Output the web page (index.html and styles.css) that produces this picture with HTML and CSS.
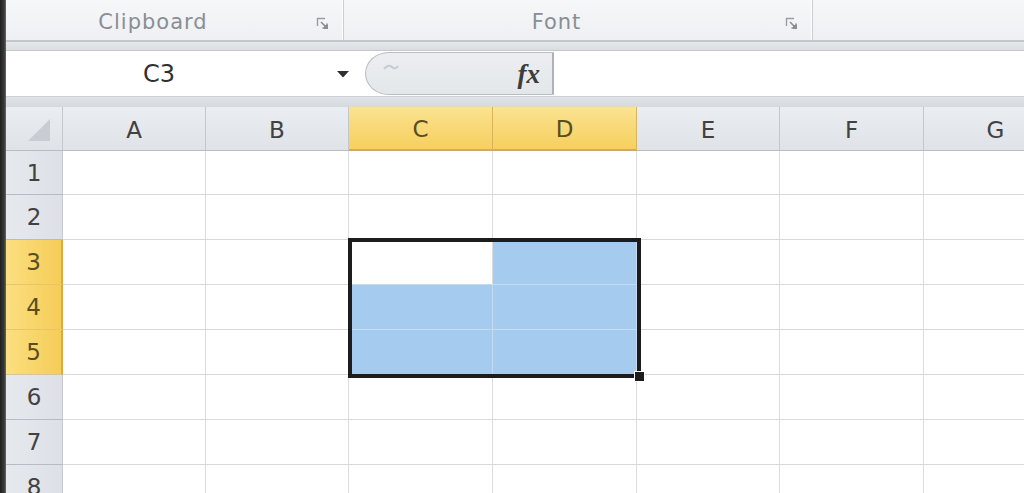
FILE: index.html
```html
<!DOCTYPE html>
<html lang="en">
<head>
<meta charset="utf-8">
<title>Spreadsheet</title>
<link rel="stylesheet" href="styles.css">
</head>
<body>
<div class="app">
  <div class="edge"></div>
  <div class="main">
    <div class="ribbon">
      <div class="group g1">
        <span class="glabel">Clipboard</span>
        <svg class="launcher" width="14" height="14" viewBox="0 0 14 14"><path d="M1.5 9V1.5H9" fill="none" stroke="#9a9ea4" stroke-width="1.4"/><path d="M5 5L11 11M11 6.5V11H6.5" fill="none" stroke="#8a8e94" stroke-width="1.6"/><rect x="8" y="8" width="4" height="4" fill="#8a8e94"/></svg>
      </div>
      <div class="group g2">
        <span class="glabel">Font</span>
        <svg class="launcher" width="14" height="14" viewBox="0 0 14 14"><path d="M1.5 9V1.5H9" fill="none" stroke="#9a9ea4" stroke-width="1.4"/><path d="M5 5L11 11M11 6.5V11H6.5" fill="none" stroke="#8a8e94" stroke-width="1.6"/><rect x="8" y="8" width="4" height="4" fill="#8a8e94"/></svg>
      </div>
      <div class="group g3"></div>
    </div>
    <div class="band"></div>
    <div class="fbar">
      <div class="namebox">
        <span class="ref">C3</span>
        <svg class="dd" width="14" height="8" viewBox="0 0 14 8"><path d="M1 1H13L7 7.5Z" fill="#2e2e2e"/></svg>
      </div>
      <div class="fxbox">
        <svg class="faint" width="18" height="10" viewBox="0 0 18 10"><path d="M2 6C5 2 8 2 10 4S14 6 16 3" fill="none" stroke="#c7cacf" stroke-width="2"/></svg>
        <span class="fx">fx</span>
      </div>
      <div class="finput"></div>
    </div>
    <div class="band2"></div>
    <div class="sheet">
      <div class="hd corner"><svg width="24" height="24" viewBox="0 0 24 24"><path d="M23 1V23H1Z" fill="#c9cdd3"/></svg></div>
      <div class="hd col">A</div>
      <div class="hd col">B</div>
      <div class="hd col on">C</div>
      <div class="hd col on">D</div>
      <div class="hd col">E</div>
      <div class="hd col">F</div>
      <div class="hd col">G</div>

      <div class="hd row">1</div>
      <div class="c"></div><div class="c"></div><div class="c"></div><div class="c"></div><div class="c"></div><div class="c"></div><div class="c"></div>

      <div class="hd row">2</div>
      <div class="c"></div><div class="c"></div><div class="c"></div><div class="c"></div><div class="c"></div><div class="c"></div><div class="c"></div>

      <div class="hd row on">3</div>
      <div class="c"></div><div class="c"></div><div class="c"></div><div class="c hl"></div><div class="c"></div><div class="c"></div><div class="c"></div>

      <div class="hd row on">4</div>
      <div class="c"></div><div class="c"></div><div class="c hl"></div><div class="c hl"></div><div class="c"></div><div class="c"></div><div class="c"></div>

      <div class="hd row on">5</div>
      <div class="c"></div><div class="c"></div><div class="c hl"></div><div class="c hl"></div><div class="c"></div><div class="c"></div><div class="c"></div>

      <div class="hd row">6</div>
      <div class="c"></div><div class="c"></div><div class="c"></div><div class="c"></div><div class="c"></div><div class="c"></div><div class="c"></div>

      <div class="hd row">7</div>
      <div class="c"></div><div class="c"></div><div class="c"></div><div class="c"></div><div class="c"></div><div class="c"></div><div class="c"></div>

      <div class="hd row">8</div>
      <div class="c"></div><div class="c"></div><div class="c"></div><div class="c"></div><div class="c"></div><div class="c"></div><div class="c"></div>

      <div class="selbox"><div class="handle"></div></div>
    </div>
  </div>
</div>
</body>
</html>
```

FILE: styles.css
```css
html, body {
  margin: 0;
  padding: 0;
  background: #ffffff;
  overflow: hidden;
}
body {
  width: 1024px;
  height: 493px;
  font-family: "DejaVu Sans", "Liberation Sans", sans-serif;
}
.app {
  display: flex;
  width: 1024px;
  height: 493px;
  overflow: hidden;
}
.edge {
  width: 6px;
  flex: none;
  background: linear-gradient(to right, #1f1f1f, #3a3a3a 70%, #6a6a6a);
}
.main {
  width: 1018px;
  flex: none;
  display: flex;
  flex-direction: column;
  overflow: hidden;
}

/* Ribbon */
.ribbon {
  height: 40px;
  flex: none;
  display: flex;
  background: linear-gradient(#f6f7f9, #eef0f3);
  border-bottom: 2px solid #c3c7cd;
  box-sizing: content-box;
}
.group {
  display: grid;
  grid-template-columns: 1fr 14px;
  column-gap: 16px;
  align-items: center;
  padding-right: 13px;
  box-sizing: border-box;
  border-right: 1px solid #c9ccd1;
  box-shadow: inset -1px 0 0 #ffffff;
}
.g1 { width: 338px; flex: none; }
.g2 { width: 469px; flex: none; }
.g3 { flex: 1; border-right: none; box-shadow: none; }
.glabel {
  justify-self: center;
  font-size: 21px;
  letter-spacing: 1px;
  color: #8a8e94;
  line-height: 40px;
  margin-top: 2px;
}
.launcher {
  display: block;
  margin-top: 6px;
}

.band {
  height: 8px;
  flex: none;
  background: linear-gradient(#e4e7eb, #d9dde2);
  border-bottom: 1px solid #c5c9cf;
}

/* Formula bar */
.fbar {
  height: 45px;
  flex: none;
  display: flex;
  background: #ffffff;
}
.namebox {
  width: 359px;
  flex: none;
  display: grid;
  grid-template-columns: 1fr 14px;
  column-gap: 16px;
  align-items: center;
  padding-right: 15px;
  box-sizing: border-box;
}
.ref {
  justify-self: center;
  font-size: 24px;
  color: #303030;
  margin-left: -8px;
}
.dd { display: block; }
.fxbox {
  width: 189px;
  flex: none;
  display: flex;
  align-items: center;
  justify-content: space-between;
  padding: 0 12px 0 16px;
  box-sizing: border-box;
  background: linear-gradient(#eceef1, #e4e7ea);
  border: 1px solid #b9bdc3;
  border-right: 2px solid #aeb2b8;
  border-radius: 24px 0 0 24px / 22px 0 0 22px;
  margin-top: 1px;
  margin-bottom: 1px;
}
.faint {
  display: block;
  align-self: flex-start;
  margin-top: 10px;
}
.fx {
  font-family: "Liberation Serif", "DejaVu Serif", serif;
  font-style: italic;
  font-weight: bold;
  font-size: 27px;
  color: #3d3d3d;
  margin-top: 2px;
}
.finput {
  flex: 1;
  background: #ffffff;
}

.band2 {
  height: 11px;
  flex: none;
  background: linear-gradient(#dfe2e6, #d6dadf);
  border-top: 1px solid #cdd1d6;
  box-sizing: border-box;
}

/* Sheet */
.sheet {
  position: relative;
  flex: none;
  display: grid;
  grid-template-columns: 57px 143px 143px 144px 144px 143px 144px 144px;
  grid-template-rows: 44px 44px repeat(7, 45px);
  width: 1062px;
}
.hd {
  display: flex;
  align-items: center;
  justify-content: center;
  box-sizing: border-box;
  font-size: 23px;
  color: #414141;
  background: linear-gradient(#eaedf1, #dfe3e8);
  border-right: 1px solid #c4c8ce;
  border-bottom: 1px solid #b8bcc2;
}
.hd.col {
  padding-top: 2px;
}
.hd.row {
  background: linear-gradient(to right, #e6e9ee, #dde1e7);
}
.hd.on {
  background: linear-gradient(#fbe391, #f6cf5e);
  color: #584e22;
  border-right-color: #d9b45a;
  border-bottom: 2px solid #e1a93a;
}
.hd.row.on {
  background: linear-gradient(to right, #fbdf80, #f5cd58);
  border-right: 2px solid #e1a93a;
  border-bottom: 1px solid #e9c56a;
}
.corner {
  justify-content: flex-end;
  align-items: flex-end;
  padding: 0 11px 8px 0;
}
.corner svg { display: block; }
.c {
  box-sizing: border-box;
  border-right: 1px solid #dcdcdc;
  border-bottom: 1px solid #d9d9d9;
  background: #ffffff;
}
.c.hl {
  background: #a5cbee;
  border-right-color: #c3dcf3;
  border-bottom-color: #c3dcf3;
}
.selbox {
  position: absolute;
  left: 342px;
  top: 131px;
  width: 293px;
  height: 140px;
  box-sizing: border-box;
  border: 4px solid #1c1c1c;
}
.handle {
  position: absolute;
  right: -8px;
  bottom: -8px;
  width: 9px;
  height: 9px;
  background: #1c1c1c;
  border: 1px solid #ffffff;
}
```
